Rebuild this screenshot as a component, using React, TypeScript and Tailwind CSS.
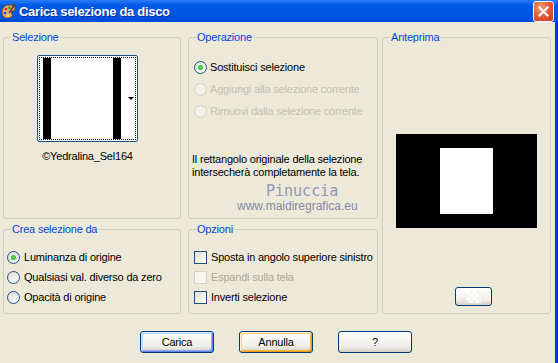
import type { ReactNode } from "react";

function Radio({ checked, disabled }: { checked?: boolean; disabled?: boolean }) {
  return (
    <span
      className={
        disabled
          ? "flex h-[13px] w-[13px] shrink-0 items-center justify-center rounded-full border border-[#d5d2c3] bg-[#f1efe6]"
          : "flex h-[13px] w-[13px] shrink-0 items-center justify-center rounded-full border border-[#1c5180] bg-[linear-gradient(135deg,#dcdcd7,#ffffff)]"
      }
    >
      {checked && <span className="h-[5px] w-[5px] rounded-full bg-[radial-gradient(circle,#5fe35a,#21a121)]" />}
    </span>
  );
}

function Check({ disabled }: { disabled?: boolean }) {
  return (
    <span
      className={
        disabled
          ? "h-[13px] w-[13px] shrink-0 border border-[#d5d2c3] bg-[#f4f3ee]"
          : "h-[13px] w-[13px] shrink-0 border border-[#1c5180] bg-[linear-gradient(135deg,#dcdcd7,#ffffff)]"
      }
    />
  );
}

function Row({ control, label, disabled }: { control: ReactNode; label: string; disabled?: boolean }) {
  return (
    <div className="flex h-[20px] items-center gap-[4px] whitespace-nowrap">
      {control}
      <span className={disabled ? "text-[#aca899]" : "text-black"}>{label}</span>
    </div>
  );
}

function Group({ title, className, children }: { title: string; className?: string; children: ReactNode }) {
  return (
    <fieldset className={`rounded-[3px] border border-[#d0d0bf] ${className ?? ""}`}>
      <legend className="ml-[7px] px-[1px] text-[11px] leading-[14px] text-[#0046d5]">{title}</legend>
      {children}
    </fieldset>
  );
}

function XpButton({ label, variant }: { label: string; variant?: "default" | "hover" }) {
  const ring =
    variant === "default"
      ? "shadow-[inset_1px_1px_0_#cee7ff,inset_-1px_-1px_0_#6982ee,inset_2px_2px_0_#bcd4f6,inset_-2px_-2px_0_#89ade4]"
      : variant === "hover"
        ? "shadow-[inset_1px_1px_0_#fff0cf,inset_-1px_-1px_0_#e5a01a,inset_2px_2px_0_#fcd27a,inset_-2px_-2px_0_#f8b330]"
        : "";
  return (
    <button
      type="button"
      className={`flex h-[22px] w-[74px] items-center justify-center rounded-[3px] border border-[#003c74] bg-[linear-gradient(180deg,#ffffff,#f0efea_70%,#d6d0c5)] text-[11px] text-black ${ring}`}
    >
      {label}
    </button>
  );
}

export default function App() {
  return (
    <div className="flex h-[363px] w-[558px] flex-col overflow-hidden bg-[#ece9d8] font-['Liberation_Sans',Arial,sans-serif] text-[11px] leading-[13px] tracking-[-0.2px] text-black">
      {/* title bar */}
      <div className="flex h-[22px] shrink-0 items-center bg-[linear-gradient(180deg,#2a7cf6_0%,#0058e8_25%,#0054e3_75%,#0048d8_100%)] pr-[4px]">
        <svg width="17" height="17" viewBox="0 0 17 17">
          <path d="M2 9c0-4 3-7 7-7s6 2 6 4-2 2-3 2-1 2 0 3c1 2-1 4-4 4-4 0-6-2-6-6z" fill="#e8b070" stroke="#7a4a1a" strokeWidth="1" />
          <circle cx="6" cy="6" r="1.3" fill="#e02020" />
          <circle cx="9.5" cy="4.8" r="1.3" fill="#20a020" />
          <circle cx="5" cy="10" r="1.3" fill="#2040e0" />
          <circle cx="8" cy="13" r="1.2" fill="#f0e020" />
          <path d="M15 1l-6 9" stroke="#6b3a10" strokeWidth="1.6" />
          <path d="M9 10l-1.5 2" stroke="#c0c0c0" strokeWidth="2" />
        </svg>
        <span className="ml-[2px] text-[13px] font-bold leading-none tracking-[-0.3px] text-white [text-shadow:1px_1px_0_#0a2a9a]">
          Carica selezione da disco
        </span>
        <div className="ml-auto flex h-[21px] w-[21px] items-center justify-center rounded-[3px] border border-white bg-[radial-gradient(circle_at_35%_30%,#f29c7e,#e0532e_55%,#c43c1c)]">
          <svg width="11" height="11" viewBox="0 0 11 11">
            <path d="M1.5 1.5l8 8M9.5 1.5l-8 8" stroke="#ffffff" strokeWidth="2" strokeLinecap="square" />
          </svg>
        </div>
      </div>

      {/* body */}
      <div className="flex flex-1 border-r-[3px] border-[#0831d9]">
        <div className="flex flex-1 flex-col pl-[3px] pt-[8px]">
          <div className="grid grid-cols-[185px_194px_169px] grid-rows-[189px_92px] gap-y-[3px]">
            <Group title="Selezione" className="w-[178px]">
              <div className="ml-[33px] mt-[11px] h-[87px] w-[101px] rounded-[2px] border border-[#1c5180] bg-white p-[1px]">
                <div className="flex h-full border border-dotted border-black">
                  <div className="ml-[3px] w-[8px] bg-black" />
                  <div className="w-[62px] bg-white" />
                  <div className="w-[8px] bg-black" />
                  <div className="flex flex-1 items-center justify-end pr-[1px]">
                    <span className="h-0 w-0 border-x-[3px] border-t-[3px] border-x-transparent border-t-black" />
                  </div>
                </div>
              </div>
              <div className="ml-[33px] mt-[8px] w-[101px] text-center">©Yedralina_Sel164</div>
            </Group>

            <Group title="Operazione" className="w-[190px]">
              <div className="mt-[12px] whitespace-nowrap pl-[5px]">
                <div className="flex h-[22px] items-center gap-[3px]">
                  <Radio checked />
                  <span>Sostituisci selezione</span>
                </div>
                <div className="flex h-[22px] items-center gap-[3px]">
                  <Radio disabled />
                  <span className="text-[#c4c1b2]">Aggiungi alla selezione corrente</span>
                </div>
                <div className="flex h-[22px] items-center gap-[3px]">
                  <Radio disabled />
                  <span className="text-[#c4c1b2]">Rimuovi dalla selezione corrente</span>
                </div>
              </div>
              <p className="mt-[31px] whitespace-nowrap pl-[3px]">
                Il rettangolo originale della selezione
                <br />
                intersecherà completamente la tela.
              </p>
              <div className="mt-[4px] pl-[77px] font-['DejaVu_Sans_Mono',monospace] text-[15px] leading-[16px] tracking-normal text-[#9297b5]">
                Pinuccia
              </div>
              <div className="mt-[1px] pl-[48px] text-[12px] leading-[13px] tracking-normal text-[#858aa8]">www.maidiregrafica.eu</div>
            </Group>

            <Group title="Anteprima" className="row-span-2 w-[169px]">
              <div className="mx-auto mt-[90px] flex h-[94px] w-[141px] items-center justify-center bg-black">
                <div className="h-[66px] w-[53px] bg-white" />
              </div>
              <div className="ml-[72px] mt-[59px] flex h-[19px] w-[37px] items-center justify-center rounded-[3px] border border-[#003c74] bg-[linear-gradient(180deg,#ffffff,#f0efea_70%,#d6d0c5)]">
                <svg width="14" height="12" viewBox="0 0 14 12">
                  <rect x="0" y="0" width="14" height="12" fill="#f4f3ee" />
                  <rect x="0" y="0" width="3" height="3" fill="#ffffff" />
                  <rect x="6" y="0" width="3" height="3" fill="#ffffff" />
                  <rect x="3" y="3" width="3" height="3" fill="#ffffff" />
                  <rect x="9" y="3" width="3" height="3" fill="#ffffff" />
                  <rect x="0" y="6" width="3" height="3" fill="#ffffff" />
                  <rect x="6" y="6" width="3" height="3" fill="#ffffff" />
                  <rect x="3" y="9" width="3" height="3" fill="#ffffff" />
                  <rect x="9" y="9" width="3" height="3" fill="#ffffff" />
                </svg>
              </div>
            </Group>

            <Group title="Crea selezione da" className="w-[178px]">
              <div className="mt-[11px] pl-[3px]">
                <Row control={<Radio checked />} label="Luminanza di origine" />
                <Row control={<Radio />} label="Qualsiasi val. diverso da zero" />
                <Row control={<Radio />} label="Opacità di origine" />
              </div>
            </Group>

            <Group title="Opzioni" className="w-[190px]">
              <div className="mt-[11px] pl-[5px]">
                <Row control={<Check />} label="Sposta in angolo superiore sinistro" />
                <Row control={<Check disabled />} label="Espandi sulla tela" disabled />
                <Row control={<Check />} label="Inverti selezione" />
              </div>
            </Group>
          </div>

          <div className="mt-[17px] flex gap-[25px] pl-[137px]">
            <XpButton label="Carica" variant="default" />
            <XpButton label="Annulla" variant="hover" />
            <XpButton label="?" />
          </div>
        </div>
      </div>
    </div>
  );
}
